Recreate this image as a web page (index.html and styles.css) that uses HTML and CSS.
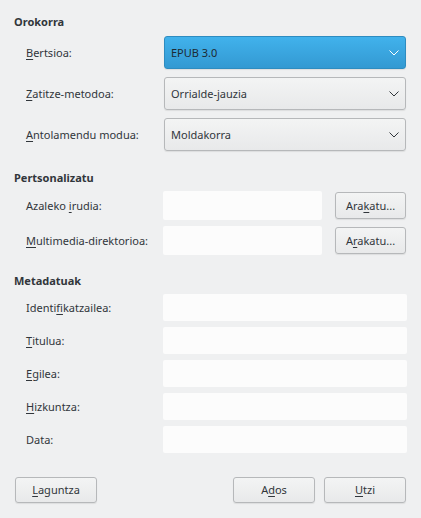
FILE: index.html
```html
<!DOCTYPE html>
<html lang="eu">
<head>
<meta charset="utf-8">
<title>EPUB</title>
<link rel="stylesheet" href="styles.css">
</head>
<body>
<div class="dialog">
  <div class="section">
    <div class="heading">Orokorra</div>
    <div class="rows rows-combo">
      <div class="row">
        <label class="label"><u>B</u>ertsioa:</label>
        <div class="combo combo-active"><span>EPUB 3.0</span><svg class="chev" viewBox="0 0 10 6" width="10" height="6"><path d="M0.5 0.5 L5 5 L9.5 0.5" /></svg></div>
      </div>
      <div class="row">
        <label class="label"><u>Z</u>atitze-metodoa:</label>
        <div class="combo"><span>Orrialde-jauzia</span><svg class="chev" viewBox="0 0 10 6" width="10" height="6"><path d="M0.5 0.5 L5 5 L9.5 0.5" /></svg></div>
      </div>
      <div class="row">
        <label class="label"><u>A</u>ntolamendu modua:</label>
        <div class="combo"><span>Moldakorra</span><svg class="chev" viewBox="0 0 10 6" width="10" height="6"><path d="M0.5 0.5 L5 5 L9.5 0.5" /></svg></div>
      </div>
    </div>
  </div>

  <div class="section section-2">
    <div class="heading">Pertsonalizatu</div>
    <div class="rows rows-file">
      <div class="row">
        <label class="label">Azaleko <u>i</u>rudia:</label>
        <div class="file">
          <div class="field field-tall"></div>
          <button class="btn btn-browse">Ara<u>k</u>atu...</button>
        </div>
      </div>
      <div class="row">
        <label class="label"><u>M</u>ultimedia-direktorioa:</label>
        <div class="file">
          <div class="field field-tall"></div>
          <button class="btn btn-browse">A<u>r</u>akatu...</button>
        </div>
      </div>
    </div>
  </div>

  <div class="section section-3">
    <div class="heading">Metadatuak</div>
    <div class="rows rows-meta">
      <div class="row"><label class="label">Identi<u>f</u>ikatzailea:</label><div class="field"></div></div>
      <div class="row"><label class="label"><u>T</u>itulua:</label><div class="field"></div></div>
      <div class="row"><label class="label"><u>E</u>gilea:</label><div class="field"></div></div>
      <div class="row"><label class="label"><u>H</u>izkuntza:</label><div class="field"></div></div>
      <div class="row"><label class="label">Data:</label><div class="field"></div></div>
    </div>
  </div>

  <div class="footer">
    <button class="btn btn-foot"><u>L</u>aguntza</button>
    <div class="footer-right">
      <button class="btn btn-foot">A<u>d</u>os</button>
      <button class="btn btn-foot"><u>U</u>tzi</button>
    </div>
  </div>
</div>
</body>
</html>
```

FILE: styles.css
```css
html, body {
  margin: 0;
  padding: 0;
  background: #eff0f1;
}

body {
  font-family: "Noto Sans", "Open Sans", "DejaVu Sans", sans-serif;
  font-size: 11px;
  color: #31363b;
  width: 421px;
  height: 518px;
  overflow: hidden;
}

u {
  text-decoration: underline;
  text-underline-offset: 2px;
  text-decoration-thickness: 1px;
}

.dialog {
  padding: 14px 14px 0 14px;
  display: flex;
  flex-direction: column;
}

.heading {
  font-weight: bold;
  line-height: 16px;
  height: 16px;
  margin-bottom: 6px;
}

.section-2 {
  margin-top: 19px;
}

.section-2 .heading,
.section-3 .heading {
  margin-bottom: 5px;
}

.section-3 {
  margin-top: 18px;
}

.rows {
  display: flex;
  flex-direction: column;
  padding-left: 12px;
}

.rows-combo { gap: 8px; }
.rows-file { gap: 6px; }
.rows-meta { gap: 6px; }

.row {
  display: grid;
  grid-template-columns: 137px 1fr;
  align-items: center;
}

.label {
  line-height: 16px;
}

.combo {
  height: 33px;
  margin: 0 1px;
  box-sizing: border-box;
  border: 1px solid #b6b8ba;
  border-radius: 3px;
  background: linear-gradient(#f3f4f4, #e8e9ea);
  box-shadow: 0 1px 1px rgba(0, 0, 0, 0.08);
  display: flex;
  align-items: center;
  justify-content: space-between;
  padding: 0 6px 0 6px;
}

.combo span {
  line-height: 16px;
}

.combo .chev {
  fill: none;
  stroke: #31363b;
  stroke-width: 1;
}

.combo-active {
  background: linear-gradient(#41b2ec, #3399d2);
  border-color: #2e8cc0;
  color: #1d2a33;
}

.combo-active .chev {
  stroke: #ffffff;
}

.field {
  height: 27px;
  background: #fcfcfc;
  border-radius: 2px;
}

.field-tall {
  height: 29px;
  flex: 1;
}

.file {
  display: flex;
  align-items: center;
  gap: 13px;
}

.btn {
  font-family: inherit;
  font-size: 11px;
  color: #31363b;
  box-sizing: border-box;
  border: 1px solid #b6b8ba;
  border-radius: 3px;
  background: linear-gradient(#f3f4f4, #e8e9ea);
  box-shadow: 0 1px 1px rgba(0, 0, 0, 0.08);
  padding: 0;
  line-height: 16px;
}

.btn-browse {
  width: 71px;
  height: 27px;
  margin-right: 1px;
}

.footer {
  margin-top: 24px;
  display: flex;
  justify-content: space-between;
  padding: 0 1px;
}

.footer-right {
  display: flex;
  gap: 9px;
}

.btn-foot {
  width: 82px;
  height: 26px;
}
```
